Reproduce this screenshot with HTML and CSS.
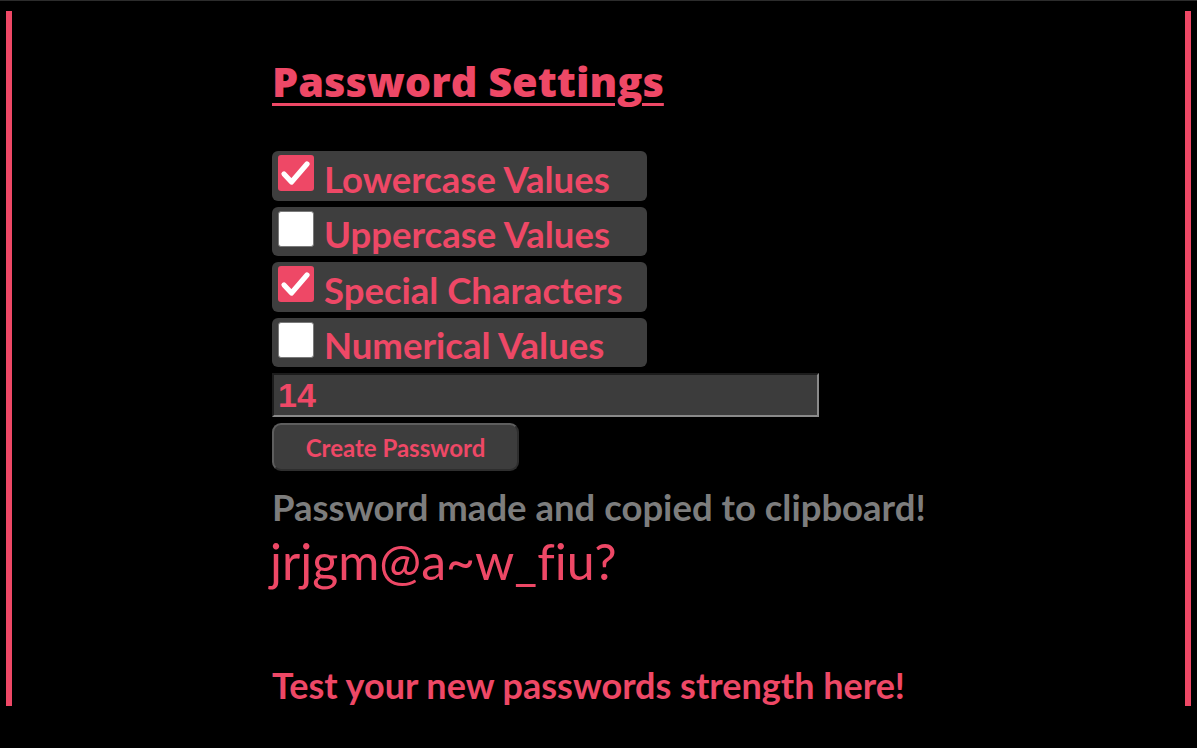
FILE: index.html
```html
<!DOCTYPE html>
<html lang="en">
<head>
<meta charset="utf-8">
<title>Password Generator</title>
<link rel="stylesheet" href="styles.css">
</head>
<body>
<main class="frame">
  <section class="panel">
    <h1 class="title">Password Settings</h1>
    <div class="options">
      <label class="option">
        <span class="box checked"><svg viewBox="0 0 36 36" width="36" height="36"><path d="M6 19 L13.5 27 L29 9" fill="none" stroke="#fff" stroke-width="5.2" stroke-linecap="round" stroke-linejoin="round"/></svg></span>
        <span class="option-text">Lowercase Values</span>
      </label>
      <label class="option">
        <span class="box"></span>
        <span class="option-text">Uppercase Values</span>
      </label>
      <label class="option">
        <span class="box checked"><svg viewBox="0 0 36 36" width="36" height="36"><path d="M6 19 L13.5 27 L29 9" fill="none" stroke="#fff" stroke-width="5.2" stroke-linecap="round" stroke-linejoin="round"/></svg></span>
        <span class="option-text">Special Characters</span>
      </label>
      <label class="option">
        <span class="box"></span>
        <span class="option-text">Numerical Values</span>
      </label>
    </div>
    <div class="length">14</div>
    <button class="create">Create Password</button>
    <p class="message">Password made and copied to clipboard!</p>
    <p class="password">jrjgm@a~w_fiu?</p>
    <p class="test">Test your new passwords strength here!</p>
  </section>
</main>
</body>
</html>
```
FILE: styles.css
```css
html, body {
  margin: 0;
  padding: 0;
  background: #000;
}
body {
  border-top: 1px solid #2c2c2c;
  font-family: Lato, "Liberation Sans", Arial, sans-serif;
  font-variant-ligatures: none;
  color: #ee4866;
}
.frame {
  margin: 10px 6px 0 6px;
  border-left: 6px solid #ee4866;
  border-right: 6px solid #ee4866;
}
.panel {
  padding-left: 260px;
  display: flex;
  flex-direction: column;
  align-items: flex-start;
}
.title {
  margin: 46px 0 0 0;
  font-family: "Open Sans", "Liberation Sans", sans-serif;
  font-size: 41.5px;
  line-height: 48px;
  font-weight: 800;
  text-decoration: underline;
  text-decoration-thickness: 3px;
  text-underline-offset: 6px;
}
.options {
  margin-top: 46px;
  display: flex;
  flex-direction: column;
  gap: 6px;
}
.option {
  width: 375px;
  height: 49.5px;
  box-sizing: border-box;
  background: #3e3e3e;
  border-radius: 6px;
  display: flex;
  align-items: flex-start;
  padding-left: 6px;
}
.box {
  width: 36px;
  height: 36px;
  margin-top: 4px;
  box-sizing: border-box;
  border-radius: 3px;
  background: #fff;
  border: 1.5px solid #7a7a7a;
  display: flex;
}
.box.checked {
  background: #ee4866;
  border: none;
}
.option-text {
  margin-left: 10px;
  margin-top: 10.5px;
  font-size: 36.5px;
  line-height: 35px;
  font-weight: 700;
}
.length {
  margin-top: 6px;
  width: 547px;
  height: 44px;
  box-sizing: border-box;
  background: #3c3c3c;
  border: 2px solid;
  border-color: #1c1c1c #8a8a8a #8a8a8a #1c1c1c;
  padding-left: 4px;
  font-family: "Liberation Sans", Arial, sans-serif;
  font-size: 34px;
  font-weight: bold;
  line-height: 40px;
}
.create {
  margin-top: 6px;
  width: 247px;
  height: 48px;
  box-sizing: border-box;
  background: #3d3d3d;
  border: 2px solid;
  border-color: #5e5e5e #2e2e2e #2e2e2e #5e5e5e;
  border-radius: 9px;
  color: #ee4866;
  font-family: Lato, "Liberation Sans", Arial, sans-serif;
  font-weight: 700;
  font-size: 24px;
  padding: 0;
}
.message {
  margin: 16px 0 0 0;
  font-size: 36.5px;
  line-height: 40px;
  font-weight: 700;
  color: #7d7d7d;
}
.password {
  margin: 7px 0 0 -2px;
  font-size: 50px;
  line-height: 54px;
}
.test {
  margin: 76px 0 0 0;
  font-size: 36px;
  line-height: 42px;
  font-weight: 700;
}
```
